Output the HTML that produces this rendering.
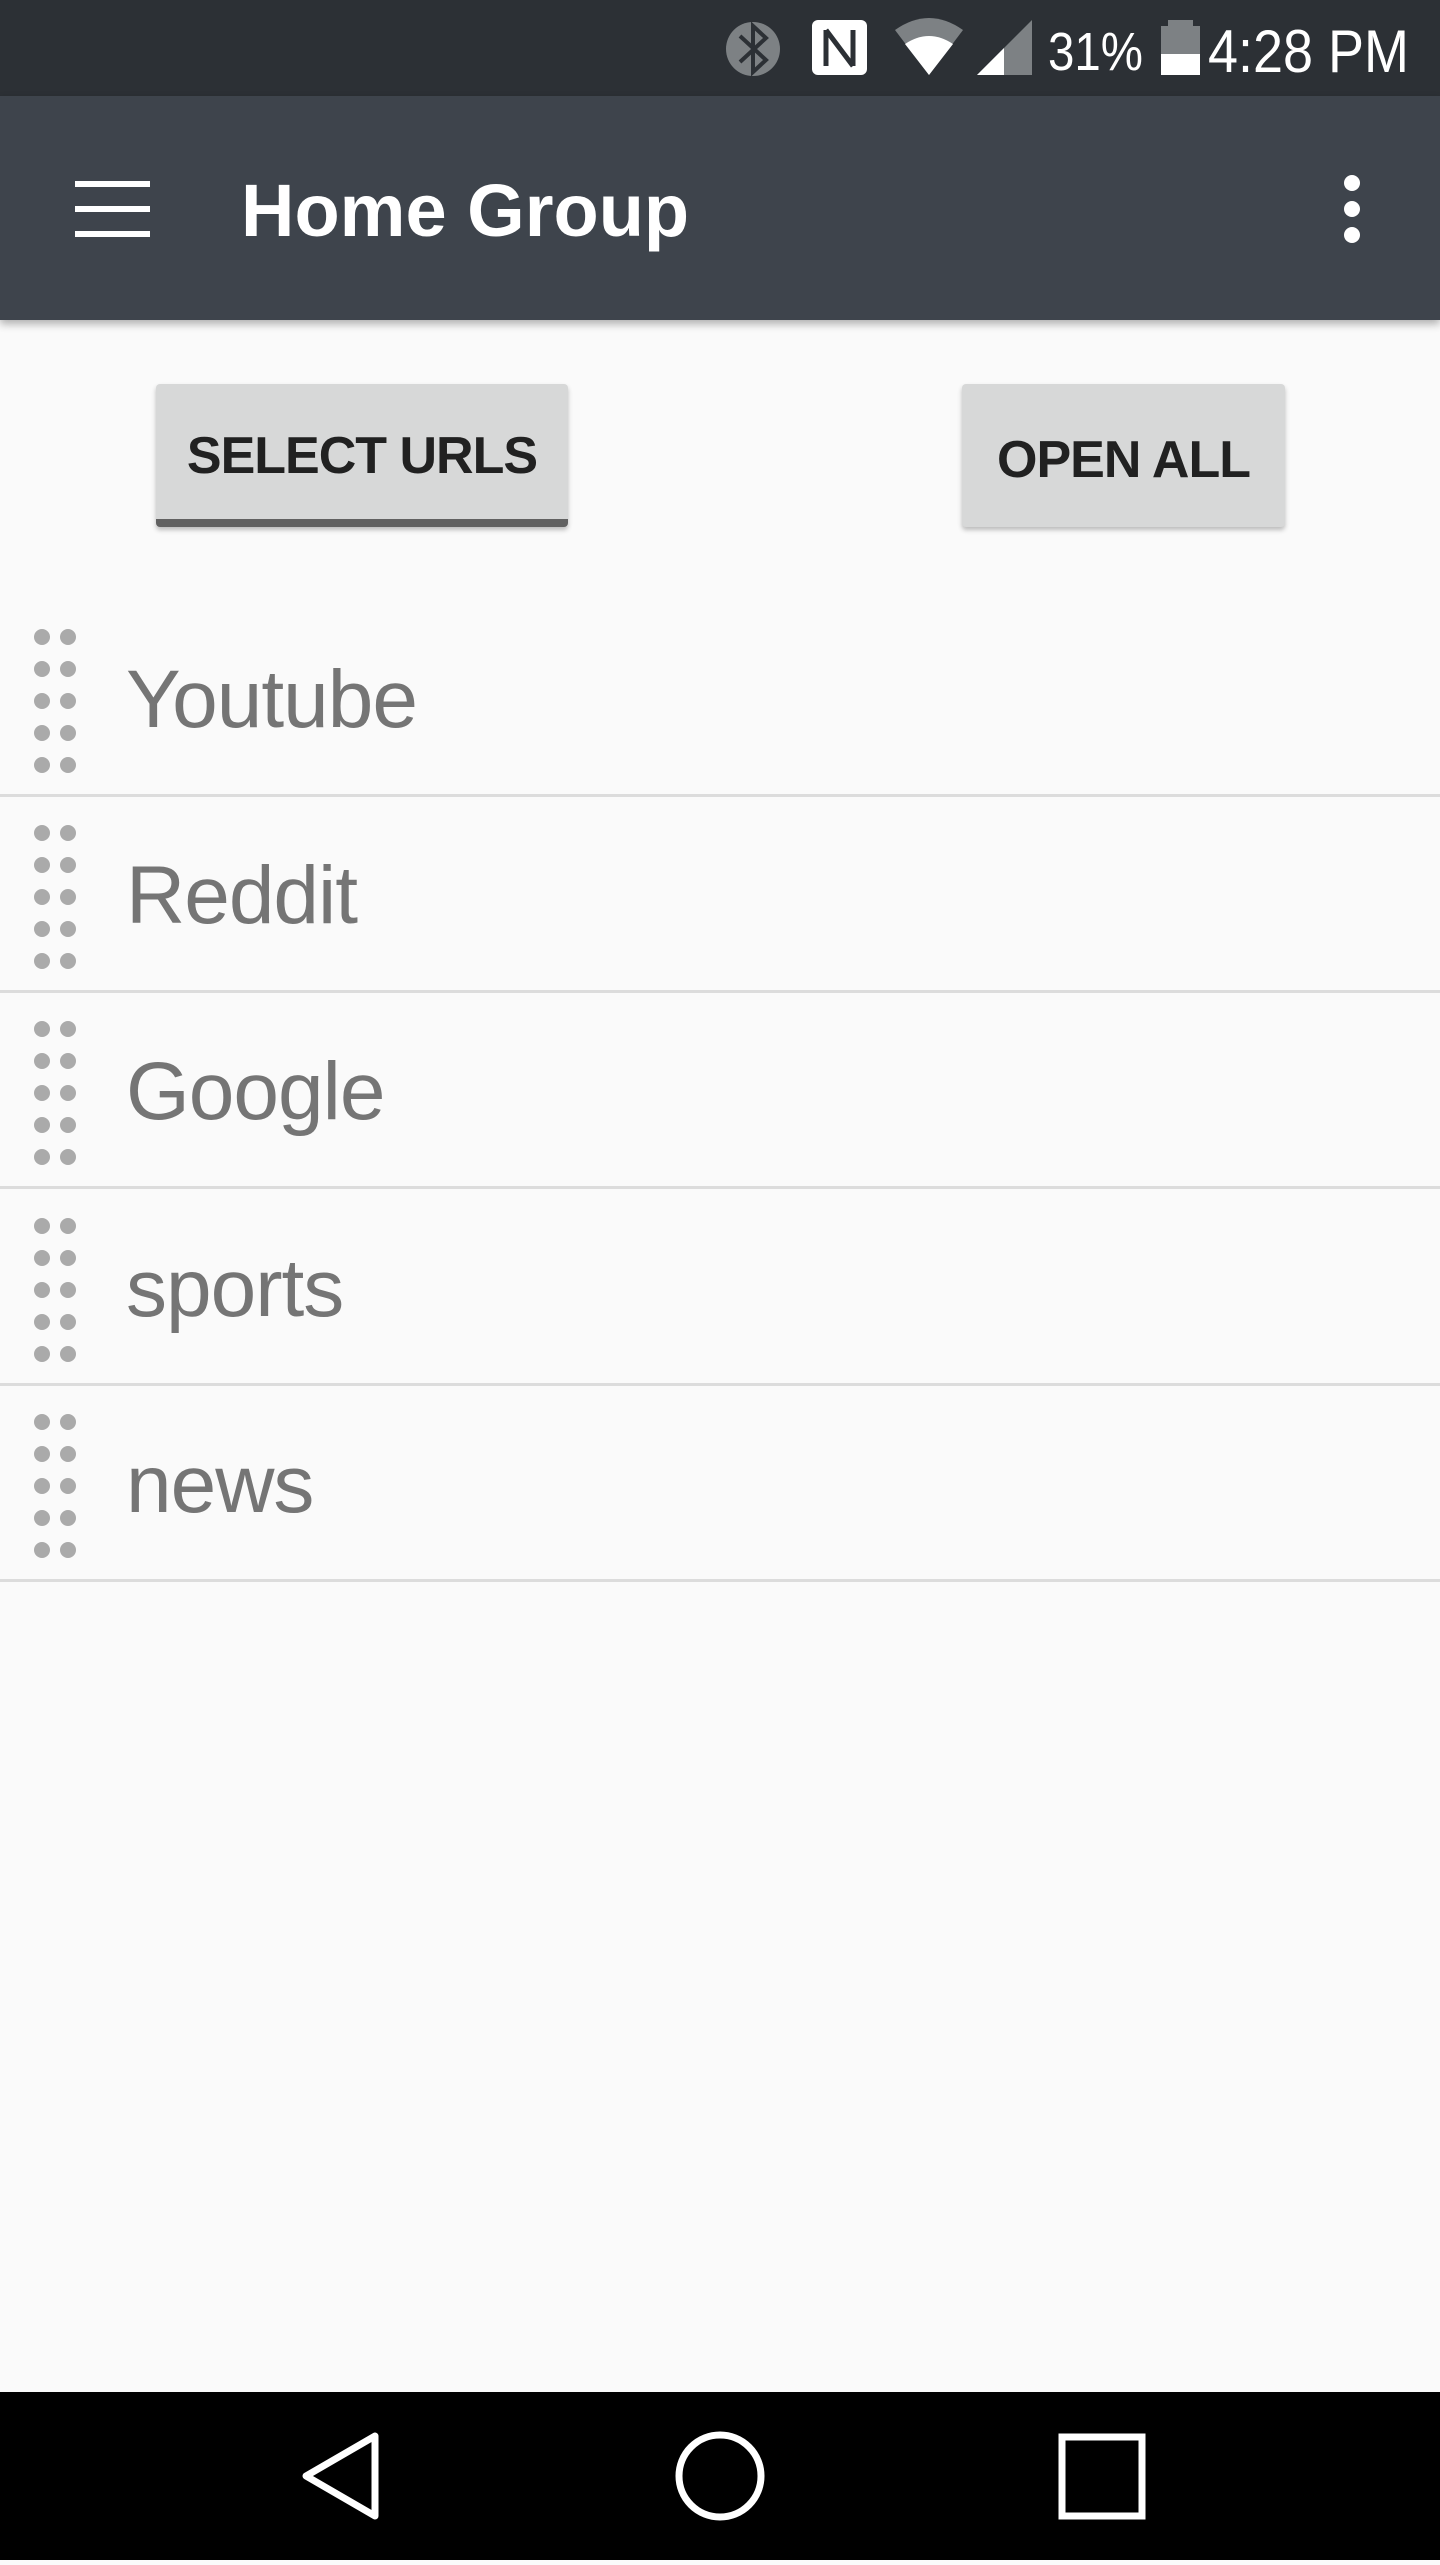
<!DOCTYPE html>
<html><head><meta charset="utf-8"><style>
*{margin:0;padding:0;box-sizing:border-box}
body{width:1440px;height:2560px;background:#fafafa;position:relative;overflow:hidden;font-family:"Liberation Sans",sans-serif}
.abs{position:absolute}
#sb{left:0;top:0;width:1440px;height:96px;background:#2c3035}
#ab{left:0;top:96px;width:1440px;height:224px;background:#3e444c;box-shadow:0 4px 8px rgba(0,0,0,.3)}
.btn{background:#d7d8d8;border-radius:4px;box-shadow:0 3px 5px rgba(0,0,0,.25);color:#212121;font-weight:bold;font-size:52px;letter-spacing:-1px;display:flex;align-items:center;justify-content:center;height:143px;top:384px;padding-top:8px}
.row{left:0;width:1440px;height:196px;border-bottom:3px solid #dcdcdc}
.row span{position:absolute;left:126px;top:50%;transform:translateY(-48%);font-size:82px;color:#757575;letter-spacing:-1px}
.dots{position:absolute;left:34px;top:28px;width:46px;height:148px}
.dots i{position:absolute;width:16px;height:16px;border-radius:50%;background:#aaa}
#nav{left:0;top:2392px;width:1440px;height:168px;background:#000}
</style></head><body>
<div id="sb" class="abs">
<svg class="abs" style="left:0;top:0" width="1440" height="96">
<circle cx="753" cy="49" r="27" fill="#7d8184"/>
<path d="M740 36 L766 60 L753 72 L753 26 L766 38 L740 62" stroke="#2c3035" stroke-width="4" fill="none"/>
<rect x="812" y="20" width="55" height="55" rx="6" fill="#fff"/>
<path d="M826 30 L853 66 M826 30 L826 66 M853 30 L853 66" stroke="#2c3035" stroke-width="5" fill="none"/>
<path d="M895 30 Q929 6 963 30 L929 75 Z" fill="#7d8184"/>
<path d="M905 44 Q929 28 953 44 L929 75 Z" fill="#fff"/>
<path d="M977 75 L1032 20 L1032 75 Z" fill="#7d8184"/>
<path d="M977 75 L1004 48 L1004 75 Z" fill="#fff"/>
<rect x="1168" y="20" width="25" height="8" fill="#7d8184"/>
<rect x="1161" y="26" width="39" height="49" fill="#7d8184"/>
<rect x="1161" y="54" width="39" height="21" fill="#fff"/>
<text x="1048" y="70" fill="#fff" font-size="54" font-family="Liberation Sans" textLength="95" lengthAdjust="spacingAndGlyphs">31%</text>
<text x="1208" y="72" fill="#fff" font-size="60" font-family="Liberation Sans" textLength="201" lengthAdjust="spacingAndGlyphs">4:28 PM</text>
</svg></div>
<div id="ab" class="abs">
<svg class="abs" style="left:0;top:0" width="1440" height="224">
<rect x="75" y="85" width="75" height="6" fill="#fff"/>
<rect x="75" y="110" width="75" height="6" fill="#fff"/>
<rect x="75" y="135" width="75" height="6" fill="#fff"/>
<circle cx="1352" cy="87" r="8" fill="#fff"/><circle cx="1352" cy="113" r="8" fill="#fff"/><circle cx="1352" cy="139" r="8" fill="#fff"/>
</svg>
<div class="abs" style="left:241px;top:65px;font-size:74px;color:#fff;font-weight:bold;line-height:100px">Home Group</div>
</div>
<div class="abs btn" style="left:156px;width:412px;border-bottom:8px solid #616161">SELECT URLS</div>
<div class="abs btn" style="left:962px;width:323px">OPEN ALL</div>

<div class="abs row" style="top:601px"><div class="dots"><i style="left:0;top:0"></i><i style="left:26px;top:0"></i><i style="left:0;top:32px"></i><i style="left:26px;top:32px"></i><i style="left:0;top:64px"></i><i style="left:26px;top:64px"></i><i style="left:0;top:96px"></i><i style="left:26px;top:96px"></i><i style="left:0;top:128px"></i><i style="left:26px;top:128px"></i></div><span>Youtube</span></div>
<div class="abs row" style="top:797px"><div class="dots"><i style="left:0;top:0"></i><i style="left:26px;top:0"></i><i style="left:0;top:32px"></i><i style="left:26px;top:32px"></i><i style="left:0;top:64px"></i><i style="left:26px;top:64px"></i><i style="left:0;top:96px"></i><i style="left:26px;top:96px"></i><i style="left:0;top:128px"></i><i style="left:26px;top:128px"></i></div><span>Reddit</span></div>
<div class="abs row" style="top:993px"><div class="dots"><i style="left:0;top:0"></i><i style="left:26px;top:0"></i><i style="left:0;top:32px"></i><i style="left:26px;top:32px"></i><i style="left:0;top:64px"></i><i style="left:26px;top:64px"></i><i style="left:0;top:96px"></i><i style="left:26px;top:96px"></i><i style="left:0;top:128px"></i><i style="left:26px;top:128px"></i></div><span>Google</span></div>
<div class="abs row" style="top:1190px"><div class="dots"><i style="left:0;top:0"></i><i style="left:26px;top:0"></i><i style="left:0;top:32px"></i><i style="left:26px;top:32px"></i><i style="left:0;top:64px"></i><i style="left:26px;top:64px"></i><i style="left:0;top:96px"></i><i style="left:26px;top:96px"></i><i style="left:0;top:128px"></i><i style="left:26px;top:128px"></i></div><span>sports</span></div>
<div class="abs row" style="top:1386px"><div class="dots"><i style="left:0;top:0"></i><i style="left:26px;top:0"></i><i style="left:0;top:32px"></i><i style="left:26px;top:32px"></i><i style="left:0;top:64px"></i><i style="left:26px;top:64px"></i><i style="left:0;top:96px"></i><i style="left:26px;top:96px"></i><i style="left:0;top:128px"></i><i style="left:26px;top:128px"></i></div><span>news</span></div>

<div id="nav" class="abs">
<svg width="1440" height="168">
<path d="M375 44 L375 124 L306 84 Z" stroke="#fff" stroke-width="7" fill="none" stroke-linejoin="round"/>
<circle cx="720" cy="84" r="41" stroke="#fff" stroke-width="7" fill="none"/>
<rect x="1062" y="45" width="80" height="79" stroke="#fff" stroke-width="7" fill="none"/>
</svg></div>
</body></html>
